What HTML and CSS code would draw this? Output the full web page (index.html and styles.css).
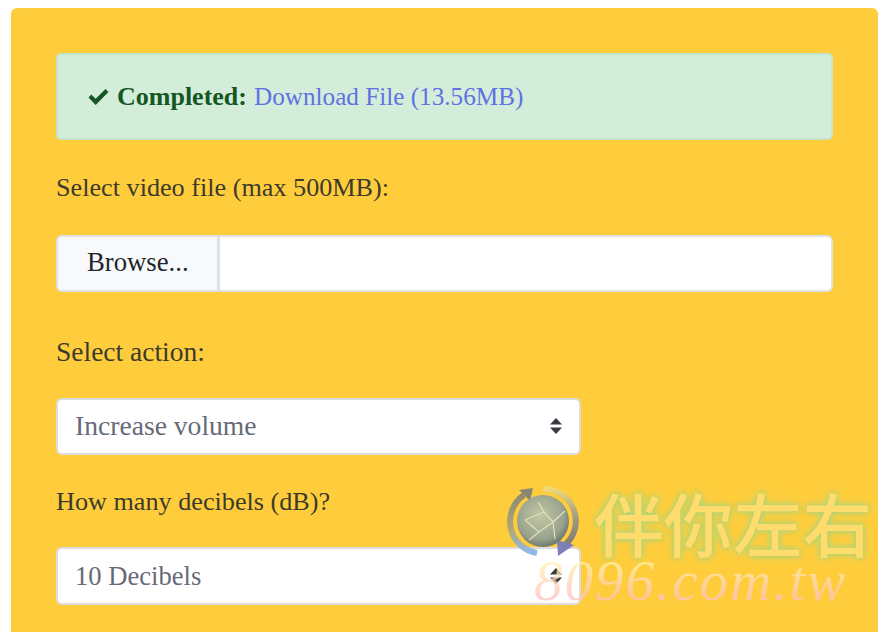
FILE: index.html
```html
<!DOCTYPE html>
<html lang="en">
<head>
<meta charset="utf-8">
<title>Video volume</title>
<link rel="stylesheet" href="styles.css">
</head>
<body>
<main class="card">
  <div class="alert">
    <svg class="check" viewBox="0 0 20 16" aria-hidden="true"><path d="M0 8.500 2.800 5.500 7.200 9.800 17 0 20 3 7.200 16Z"/></svg>
    <strong>Completed:</strong><a href="#">Download File (13.56MB)</a>
  </div>
  <label class="label">Select video file (max 500MB):</label>
  <div class="file">
    <span class="browse">Browse...</span>
    <span class="file-name"></span>
  </div>
  <label class="label label-action">Select action:</label>
  <div class="select select-action"><span>Increase volume</span>
    <svg class="arrows" viewBox="0 0 12 16" aria-hidden="true"><path d="M6 0 12 6.500H0ZM6 16 0 9.500H12Z"/></svg>
  </div>
  <label class="label label-db">How many decibels (dB)?</label>
  <div class="select select-db"><span>10 Decibels</span>
    <svg class="arrows" viewBox="0 0 12 16" aria-hidden="true"><path d="M6 0 12 6.500H0ZM6 16 0 9.500H12Z"/></svg>
  </div>
</main>
<div class="watermark" aria-hidden="true">
  <svg class="globe" viewBox="0 0 76 76">
    <defs>
      <radialGradient id="g" cx="45%" cy="40%" r="65%">
        <stop offset="0" stop-color="#c4c8a6"/>
        <stop offset="0.7" stop-color="#98a28c"/>
        <stop offset="1" stop-color="#5f6d68"/>
      </radialGradient>
      <linearGradient id="left" x1="0" y1="0" x2="0" y2="1">
        <stop offset="0" stop-color="#8f8a72"/>
        <stop offset="0.6" stop-color="#b0a878"/>
        <stop offset="1" stop-color="#8fb8ec"/>
      </linearGradient>
      <linearGradient id="right" x1="0" y1="0" x2="0" y2="1">
        <stop offset="0" stop-color="#f0d878"/>
        <stop offset="0.5" stop-color="#a09c80"/>
        <stop offset="1" stop-color="#807c70"/>
      </linearGradient>
    </defs>
    <path d="M19 11A32 32 0 0 0 32 69" fill="none" stroke="url(#left)" stroke-width="6"/>
    <path d="M14 6 28 4 25 17Z" fill="#8a8672"/>
    <path d="M38 5A32 32 0 0 1 60 61" fill="none" stroke="url(#right)" stroke-width="6"/>
    <path d="M52 56 69 61 53 72Z" fill="#7d80b8"/>
    <circle cx="38" cy="37" r="26" fill="url(#g)"/>
    <path d="M20 36 39 28 33 18M39 28 48 38 34 48 20 36M48 38 60 27M48 38 50 55M34 48 24 56" fill="none" stroke="#e2e2b8" stroke-width="1.200"/>
  </svg>
  <div class="wm-cn">伴你左右</div>
  <div class="wm-en">8096.com.tw</div>
</div>
</body>
</html>
```
FILE: styles.css
```css
html, body {
  margin: 0;
  height: 632px;
  overflow: hidden;
  background: #fff;
}
body {
  font-family: "Liberation Serif", serif;
  font-size: 26.2px;
  color: #3d3a2c;
}
.card {
  margin: 8px 8px 0 11px;
  height: 640px;
  box-sizing: border-box;
  padding: 45px 45px 0;
  background: #ffcd3c;
  border-radius: 6px 6px 0 0;
}
.alert {
  box-sizing: border-box;
  height: 87px;
  padding: 0 30px;
  display: flex;
  align-items: center;
  background: #d4edda;
  border: 2px solid #c3e6cb;
  border-radius: 5px;
  color: #155724;
  white-space: pre;
}
.check {
  width: 21px;
  height: 16px;
  margin-right: 8px;
  fill: #155724;
}
.alert strong {
  font-size: 26px;
  font-weight: 700;
  margin-right: 7px;
}
.alert a {
  font-size: 25.2px;
  color: #5e72e4;
  text-decoration: none;
}
.label {
  display: block;
  height: 31px;
  line-height: 31px;
  margin-top: 32px;
}
.file {
  box-sizing: border-box;
  display: flex;
  height: 57px;
  margin-top: 32px;
  background: #fff;
  border: 2px solid #dee2e6;
  border-radius: 6px;
  overflow: hidden;
}
.browse {
  box-sizing: border-box;
  width: 162px;
  display: flex;
  align-items: center;
  padding: 0 0 2px 29px;
  font-size: 26.7px;
  background: #f8f9fa;
  border-right: 3px solid #dee2e6;
  color: #212529;
}
.label-action {
  margin-top: 44px;
  font-size: 27.500px;
}
.label-db { margin-top: 31px; }
.select {
  box-sizing: border-box;
  width: 525px;
  height: 57px;
  margin-top: 31px;
  padding: 0 17px 1px;
  display: flex;
  align-items: center;
  justify-content: space-between;
  background: #fff;
  border: 2px solid #dcdcdc;
  border-radius: 6px;
  color: #666a78;
}
.select-action { font-size: 27.600px; }
.select-db {
  font-size: 26.600px;
  height: 58px;
  margin-top: 30px;
  padding: 0 17px;
}
.arrows {
  width: 12px;
  height: 16px;
  fill: #343a40;
}
.watermark {
  position: absolute;
  left: 500px;
  top: 480px;
  width: 380px;
  height: 140px;
  pointer-events: none;
}
.globe {
  position: absolute;
  left: 5px;
  top: 4px;
  width: 76px;
  height: 76px;
}
.wm-cn {
  position: absolute;
  left: 94px;
  top: 2px;
  font-family: "Noto Sans CJK TC", sans-serif;
  font-weight: 500;
  font-size: 69.500px;
  line-height: 80px;
  white-space: nowrap;
  color: #ffdc6c;
  text-shadow: 0 0 4px #a6d67e, 0 0 8px #a6d67e;
}
.wm-en {
  position: absolute;
  left: 34px;
  top: 71px;
  font-family: "Liberation Serif", serif;
  font-style: italic;
  font-size: 57px;
  line-height: 60px;
  letter-spacing: 2px;
  white-space: nowrap;
  color: transparent;
  background: linear-gradient(#fff6b0 15%, #ffc4c0 75%);
  -webkit-background-clip: text;
  background-clip: text;
  opacity: 0.75;
}
```
